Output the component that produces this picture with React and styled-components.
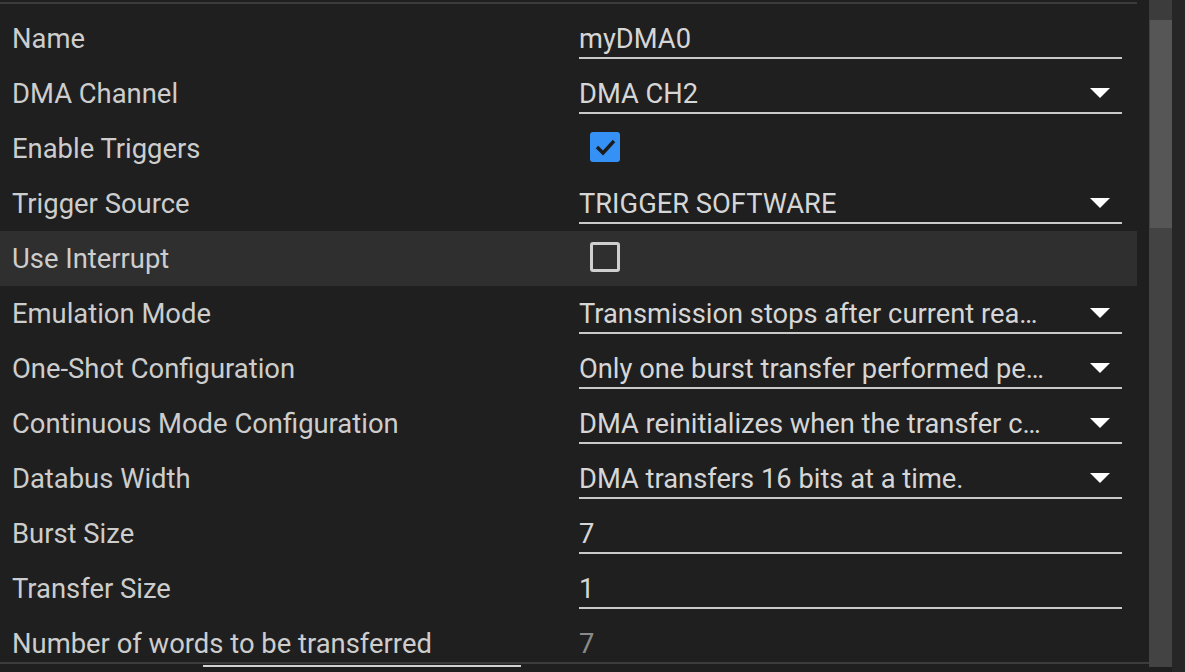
import React from "react";
import styled, { createGlobalStyle } from "styled-components";

const GlobalStyle = createGlobalStyle`
  html, body {
    margin: 0;
    padding: 0;
    background: #1f1f1f;
    overflow: hidden;
  }
  body {
    font-family: Roboto, "Noto Sans", "Liberation Sans", sans-serif;
  }
`;

const Page = styled.div`
  display: flex;
  width: 1185px;
  height: 672px;
  background: #1f1f1f;
  overflow: hidden;
`;

const Panel = styled.div`
  display: flex;
  flex-direction: column;
  width: 1149px;
  height: 672px;
`;

const TopRule = styled.div`
  width: 1137px;
  height: 2px;
  margin-top: 2px;
  background: #3b3b3b;
  flex-shrink: 0;
`;

const Body = styled.div`
  flex: 1;
  overflow: hidden;
  padding-top: 7px;
`;

const Row = styled.div`
  display: grid;
  grid-template-columns: 567px 543px;
  align-items: start;
  width: 1137px;
  height: 55px;
  box-sizing: border-box;
  padding-left: 12px;
  background: ${(p) => (p.$hover ? "#2f2f2f" : "transparent")};
`;

const Label = styled.div`
  padding-top: 13px;
  font-size: 27.4px;
  line-height: 31px;
  color: #cdcdcd;
  white-space: nowrap;
`;

const Field = styled.div`
  display: flex;
  align-items: flex-start;
  height: 48px;
  box-sizing: border-box;
  padding-top: 13px;
  border-bottom: 2px solid ${(p) => (p.$plain ? "transparent" : "#c9c9c9")};
`;

const Value = styled.div`
  flex: 0 1 auto;
  max-width: ${(p) => (p.$select ? "467px" : "100%")};
  font-size: 27.3px;
  line-height: 31px;
  color: ${(p) => (p.$disabled ? "#8a8a8a" : "#d6d6d6")};
  white-space: nowrap;
  overflow: hidden;
  text-overflow: ellipsis;
`;

const Arrow = styled.svg`
  margin-left: auto;
  margin-right: 12px;
  margin-top: 9px;
  flex-shrink: 0;
`;

const CheckCell = styled.div`
  padding: 11px 0 0 11px;
`;

const Box = styled.div`
  width: 30px;
  height: 30px;
  box-sizing: border-box;
  border-radius: 3px;
  display: flex;
  align-items: center;
  justify-content: center;
  background: ${(p) => (p.$checked ? "#3591f5" : "transparent")};
  border: ${(p) => (p.$checked ? "none" : "3px solid #cfcfcf")};
`;

const HScroll = styled.div`
  flex-shrink: 0;
  height: 8px;
  border-top: 2px solid #3c3c3c;
  margin-top: -1px;
`;

const HThumb = styled.div`
  width: 318px;
  height: 2px;
  margin-left: 203px;
  margin-top: 1px;
  background: #d2d2d2;
`;

const VScroll = styled.div`
  display: flex;
  flex-direction: column;
  width: 23px;
  height: 667px;
  background: #434343;
  flex-shrink: 0;
`;

const VTrackCap = styled.div`
  height: 20px;
  background: #3c3c3c;
`;

const VThumb = styled.div`
  height: 208px;
  margin-left: 1px;
  background: #565656;
`;

const Gutter = styled.div`
  flex: 1;
  background: #262626;
`;

function DropArrow() {
  return (
    <Arrow width="20" height="10" viewBox="0 0 20 10">
      <polygon points="0,0 20,0 10,10" fill="#ffffff" />
    </Arrow>
  );
}

function Check({ checked }) {
  return (
    <CheckCell>
      <Box $checked={checked}>
        {checked && (
          <svg width="22" height="18" viewBox="0 0 22 18">
            <polyline
              points="3,9 9,15 20,3"
              fill="none"
              stroke="#1c1c1c"
              strokeWidth="3.4"
            />
          </svg>
        )}
      </Box>
    </CheckCell>
  );
}

const props = [
  { label: "Name", kind: "text", value: "myDMA0" },
  { label: "DMA Channel", kind: "select", value: "DMA CH2" },
  { label: "Enable Triggers", kind: "check", value: true },
  { label: "Trigger Source", kind: "select", value: "TRIGGER SOFTWARE" },
  { label: "Use Interrupt", kind: "check", value: false, hover: true },
  {
    label: "Emulation Mode",
    kind: "select",
    value: "Transmission stops after current read/write access is complete",
  },
  {
    label: "One-Shot Configuration",
    kind: "select",
    value: "Only one burst transfer performed per trigger",
  },
  {
    label: "Continuous Mode Configuration",
    kind: "select",
    value: "DMA reinitializes when the transfer count is zero",
  },
  { label: "Databus Width", kind: "select", value: "DMA transfers 16 bits at a time." },
  { label: "Burst Size", kind: "text", value: "7" },
  { label: "Transfer Size", kind: "text", value: "1" },
  { label: "Number of words to be transferred", kind: "readonly", value: "7" },
];

function PropRow({ item }) {
  let cell;
  if (item.kind === "check") {
    cell = <Check checked={item.value} />;
  } else if (item.kind === "select") {
    cell = (
      <Field>
        <Value $select>{item.value}</Value>
        <DropArrow />
      </Field>
    );
  } else {
    cell = (
      <Field $plain={item.kind === "readonly"}>
        <Value $disabled={item.kind === "readonly"}>{item.value}</Value>
      </Field>
    );
  }
  return (
    <Row $hover={item.hover}>
      <Label>{item.label}</Label>
      {cell}
    </Row>
  );
}

export default function App() {
  return (
    <>
      <GlobalStyle />
      <Page>
        <Panel>
          <TopRule />
          <Body>
            {props.map((p) => (
              <PropRow key={p.label} item={p} />
            ))}
          </Body>
          <HScroll>
            <HThumb />
          </HScroll>
        </Panel>
        <VScroll>
          <VTrackCap />
          <VThumb />
        </VScroll>
        <Gutter />
      </Page>
    </>
  );
}
